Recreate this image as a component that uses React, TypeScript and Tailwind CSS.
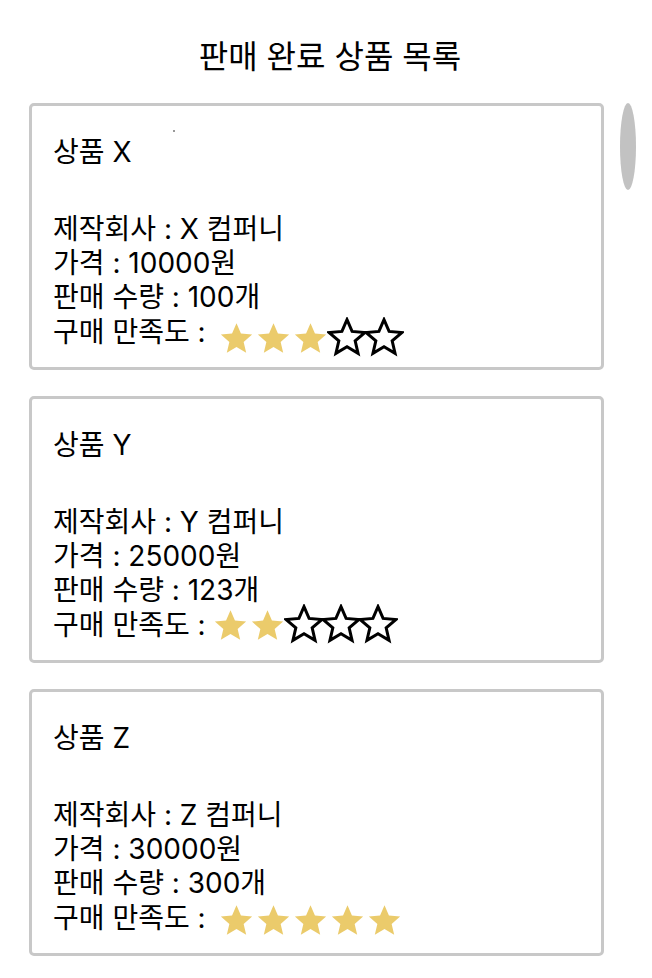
import React from "react";

type Product = {
  name: string;
  maker: string;
  price: number;
  sold: number;
  rating: number;
  starsClass: string;
};

// star row position differs a little per card in the screenshot
const products: Product[] = [
  { name: "상품 X", maker: "X 컴퍼니", price: 10000, sold: 100, rating: 3, starsClass: "ml-[12px] translate-y-[5px]" },
  { name: "상품 Y", maker: "Y 컴퍼니", price: 25000, sold: 123, rating: 2, starsClass: "ml-[6px] -translate-y-[1px]" },
  { name: "상품 Z", maker: "Z 컴퍼니", price: 30000, sold: 300, rating: 5, starsClass: "ml-[12px] translate-y-[1px]" },
];

const STAR =
  "M12 1.6l3.05 7.05 7.65.66-5.8 5.02 1.74 7.47L12 17.84 5.36 21.8l1.74-7.47-5.8-5.02 7.65-.66L12 1.6z";

function Star({ filled }: { filled: boolean }) {
  return (
    <div className="w-[37px] h-[36px] flex items-center justify-center shrink-0">
      {filled ? (
        <svg viewBox="0 0 24 24" className="w-[35px] h-[35px] shrink-0 translate-y-[1px]">
          <path d={STAR} fill="#ebcb6b" />
        </svg>
      ) : (
        <svg viewBox="0 0 24 24" className="w-[40px] h-[40px] shrink-0">
          <path d={STAR} fill="none" stroke="#000" strokeWidth="1.8" />
        </svg>
      )}
    </div>
  );
}

function ProductCard({ product }: { product: Product }) {
  return (
    <div className="w-[575px] h-[267px] border-[3px] border-[#c8c8c8] rounded-[5px] pl-[21px] pt-[29px]">
      <p className="text-[28px] leading-[35px]">{product.name}</p>
      <div className="mt-[42px] text-[28px] leading-[34px]">
        <p>제작회사 : {product.maker}</p>
        <p>가격 : {product.price}원</p>
        <p>판매 수량 : {product.sold}개</p>
        <div className="flex items-center">
          <span>구매 만족도 :</span>
          <div className={`flex ${product.starsClass}`}>
            {[1, 2, 3, 4, 5].map((i) => (
              <Star key={i} filled={i <= product.rating} />
            ))}
          </div>
        </div>
      </div>
    </div>
  );
}

export default function App() {
  return (
    <div
      className="relative w-[652px] h-[978px] bg-white text-black overflow-hidden"
      style={{ fontFamily: 'Inter, "Noto Sans CJK KR", sans-serif' }}
    >
      <h1 className="pt-[38px] pl-[8px] text-center text-[32px] leading-[38px] font-normal">
        판매 완료 상품 목록
      </h1>
      <div className="mt-[27px] pl-[29px] flex flex-col gap-[26px]">
        {products.map((p) => (
          <ProductCard key={p.name} product={p} />
        ))}
      </div>
      {/* scroll thumb */}
      <div className="absolute left-[620px] top-[103px] w-[16px] h-[87px] rounded-[50%] bg-[#c2c2c2]" />
      <div className="absolute left-[173px] top-[130px] w-[2px] h-[2px] rounded-full bg-[#777]" />
    </div>
  );
}
